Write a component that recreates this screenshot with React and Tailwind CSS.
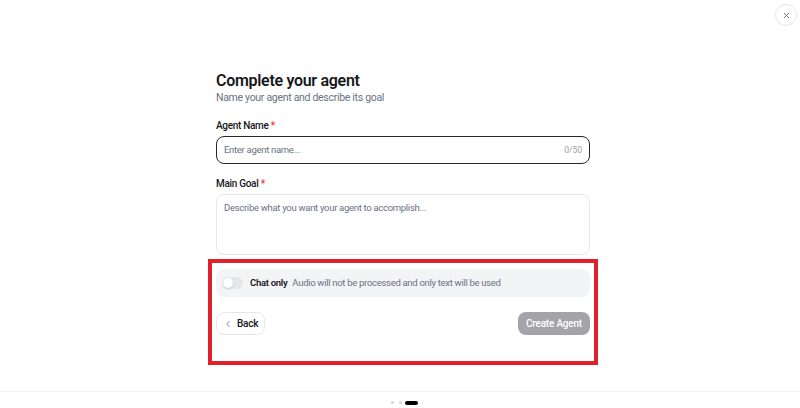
import React from "react";
import { X, ChevronLeft } from "lucide-react";

const CompleteAgent = () => {
  return (
    <div className="relative flex h-[408px] w-full flex-col bg-white font-['Roboto',sans-serif] text-zinc-900">
      <button className="absolute right-[3px] top-[4px] flex h-[22px] w-[22px] items-center justify-center rounded-full border border-gray-200 bg-white text-gray-500">
        <X className="h-[9px] w-[9px]" strokeWidth={2.5} />
      </button>

      <main className="flex-1">
        <div className="ml-[216px] w-[374px] pt-[71px]">
          <h1 className="text-[16px] font-semibold leading-[20px] tracking-[-0.3px]">
            Complete your agent
          </h1>
          <p className="mt-[-1px] text-[10.5px] leading-[16px] tracking-[-0.3px] text-gray-500">
            Name your agent and describe its goal
          </p>

          <label className="mt-[13px] block text-[10px] font-medium leading-[14px] tracking-[-0.3px]">
            Agent Name <span className="text-red-500">*</span>
          </label>
          <div className="mt-[3px] flex h-[28px] items-center justify-between rounded-lg border-[1.5px] border-zinc-800 px-[7px]">
            <span className="text-[9.5px] tracking-[-0.3px] text-gray-500">Enter agent name...</span>
            <span className="text-[8.5px] text-gray-400">0/50</span>
          </div>

          <label className="mt-[13px] block text-[10px] font-medium leading-[14px] tracking-[-0.3px]">
            Main Goal <span className="text-red-500">*</span>
          </label>
          <div className="mt-[3px] h-[61px] rounded-lg border border-gray-200 px-[7px] pt-[6px] text-[9.5px] leading-[14px] tracking-[-0.3px] text-gray-500">
            Describe what you want your agent to accomplish...
          </div>

          <div className="-mx-2 mt-[4px] border-4 border-[#e0202b] px-1 pb-[26px] pt-[6px]">
            <div className="flex h-[28px] items-center rounded-lg bg-gray-100 px-[6px]">
              <div className="flex h-[12px] w-[21px] items-center rounded-full bg-gray-200 p-[1px]">
                <div className="h-[10px] w-[10px] rounded-full bg-white shadow-sm" />
              </div>
              <span className="ml-[7px] text-[9.5px] font-semibold tracking-[-0.3px]">Chat only</span>
              <span className="ml-[5px] text-[9.5px] tracking-[-0.3px] text-gray-500">
                Audio will not be processed and only text will be used
              </span>
            </div>

            <div className="mt-[15px] flex items-center justify-between">
              <button className="flex h-[23px] items-center gap-[4px] rounded-lg border border-gray-200 px-[6px] text-[10px] font-medium tracking-[-0.2px]">
                <ChevronLeft className="h-[10px] w-[10px] text-gray-500" strokeWidth={2} />
                Back
              </button>
              <button className="h-[23px] rounded-lg bg-[#a3a3a8] px-[8px] text-[10px] font-medium tracking-[-0.2px] text-white">
                Create Agent
              </button>
            </div>
          </div>
        </div>
      </main>

      <footer className="flex h-[17px] justify-center border-t border-gray-100 pl-[8px] pt-[9px]">
        <span className="h-[3px] w-[3px] rounded-full bg-gray-300" />
        <span className="ml-[5px] h-[3px] w-[3px] rounded-full bg-gray-300" />
        <span className="ml-[3px] h-[4px] w-[13px] rounded-full bg-black" />
      </footer>
    </div>
  );
};

export default function App() {
  return <CompleteAgent />;
}
